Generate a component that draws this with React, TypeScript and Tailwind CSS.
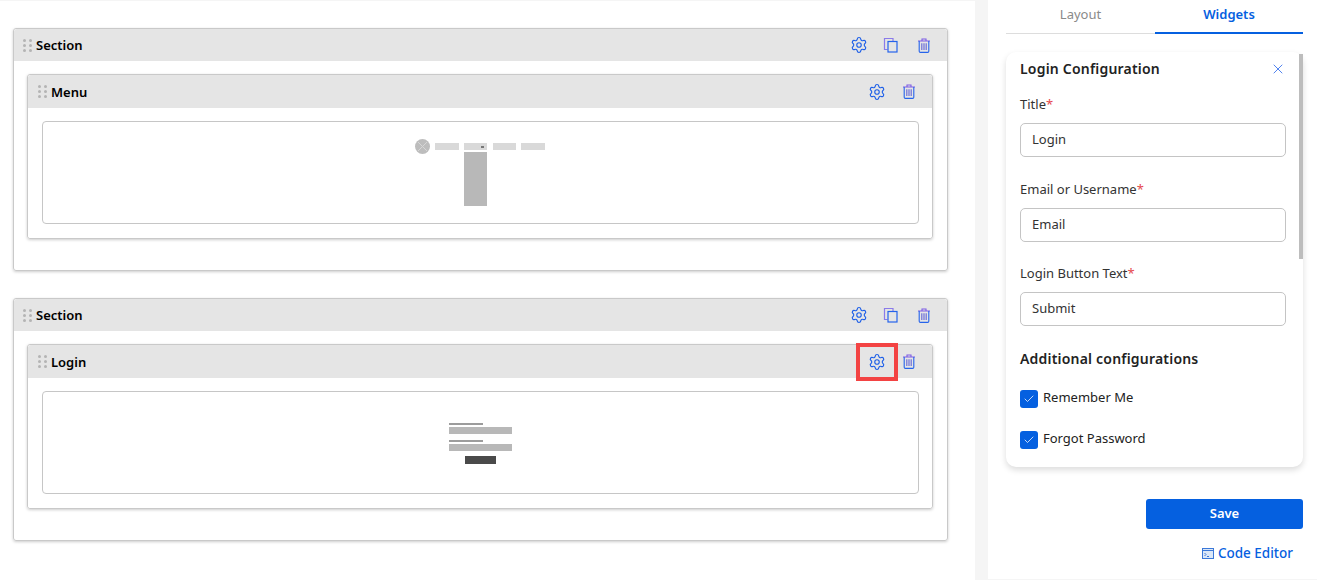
import { Check, Settings, X } from "lucide-react";

function CopyIcon() {
  return (
    <svg width="16" height="16" viewBox="0 0 16 16" fill="none" strokeWidth="1.2">
      <path d="M4.5 12.5H1.5V1.5H10V4" stroke="#8a7bea" />
      <rect x="5" y="4.5" width="9" height="10.5" stroke="#2563eb" />
    </svg>
  );
}

function BinIcon() {
  return (
    <svg width="14" height="15" viewBox="0 0 14 15" fill="none" strokeWidth="1.1">
      <path d="M1 3h12M5 3V1h4v2" stroke="#7c5ce6" />
      <path d="M2.2 3v10.2c0 .7.5 1.2 1.2 1.2h7.2c.7 0 1.2-.5 1.2-1.2V3" stroke="#2563eb" />
      <path d="M4.8 5.2v6.8M7 5.2v6.8M9.2 5.2v6.8" stroke="#6d6fd8" strokeWidth="1.2" />
    </svg>
  );
}

function Grip() {
  return (
    <div className="grid grid-cols-2 gap-x-[3px] gap-y-[2px]">
      {[0, 1, 2, 3, 4, 5].map((dot) => (
        <span key={dot} className="h-[3px] w-[3px] rounded-full bg-[#b4b4b4]" />
      ))}
    </div>
  );
}

function MenuPreview() {
  return (
    <div className="flex items-start gap-[5px] pt-[17px] pr-[2px]">
      <svg width="15" height="15" viewBox="0 0 15 15">
        <circle cx="7.5" cy="7.5" r="7.5" fill="#bdbdbd" />
        <path d="M3 3L12 12M12 3L3 12" stroke="#d6d6d6" strokeWidth="1" />
      </svg>
      <div className="mt-[4px] h-[7px] w-[24px] bg-[#d9d9d9]" />
      <div className="mt-[4px] flex w-[23px] flex-col gap-[2px]">
        <div className="flex h-[7px] items-center justify-end bg-[#d9d9d9] pr-[3px]">
          <span className="h-[2px] w-[3px] bg-[#777777]" />
        </div>
        <div className="h-[54px] bg-[#b8b8b8]" />
      </div>
      <div className="mt-[4px] ml-[1px] h-[7px] w-[23px] bg-[#d9d9d9]" />
      <div className="mt-[4px] h-[7px] w-[24px] bg-[#d9d9d9]" />
    </div>
  );
}

function LoginPreview() {
  return (
    <div className="flex w-[63px] flex-col pt-[31px]">
      <div className="h-[2px] w-[34px] bg-[#9c9c9c]" />
      <div className="mt-[2px] h-[7px] bg-[#b8b8b8]" />
      <div className="mt-[6px] h-[2px] w-[34px] bg-[#9c9c9c]" />
      <div className="mt-[2px] h-[7px] bg-[#b8b8b8]" />
      <div className="mt-[5px] h-[8px] w-[31px] self-center bg-[#4a4a4a]" />
    </div>
  );
}

function Widget({ title, preview, marked }: { title: string; preview: React.ReactNode; marked?: boolean }) {
  return (
    <div className="mt-[13px] mr-[14px] ml-[13px] rounded-[3px] border border-[#c9c9c9] shadow-[0_1px_3px_rgba(0,0,0,0.2)]">
      <div className="flex h-[33px] items-center rounded-t-[3px] bg-[#e5e5e5] pl-[10px]">
        <Grip />
        <span className="ml-[4px] pt-[2px] text-[13px] font-semibold text-black">{title}</span>
        <div className="ml-auto flex items-center pr-[16px]">
          <div className="relative mr-[16px] h-[18px]">
            <Settings className="h-[18px] w-[18px] text-[#1d5fe8]" strokeWidth={1.5} />
            {marked && (
              <div className="absolute -top-[10px] -left-[12px] h-[38px] w-[42px] border-4 border-[#f34343]" />
            )}
          </div>
          <BinIcon />
        </div>
      </div>
      <div className="rounded-b-[3px] bg-white pt-[13px] pr-[13px] pb-[14px] pl-[14px]">
        <div className="flex h-[103px] justify-center rounded-[4px] border border-[#c6c6c6]">{preview}</div>
      </div>
    </div>
  );
}

function Section({ title, preview, marked }: { title: string; preview: React.ReactNode; marked?: boolean }) {
  return (
    <div className="ml-[13px] h-[243px] w-[935px] rounded-[3px] border border-[#c9c9c9] shadow-[0_1px_3px_rgba(0,0,0,0.2)]">
      <div className="flex h-[32px] items-center rounded-t-[3px] bg-[#e5e5e5] pl-[9px]">
        <Grip />
        <span className="ml-[4px] pt-[2px] text-[13px] font-semibold text-black">Section</span>
        <div className="ml-auto flex items-center pr-[16px]">
          <Settings className="h-[18px] w-[18px] text-[#1d5fe8]" strokeWidth={1.5} />
          <span className="ml-[15px]">
            <CopyIcon />
          </span>
          <span className="ml-[18px]">
            <BinIcon />
          </span>
        </div>
      </div>
      <Widget title={title} preview={preview} marked={marked} />
    </div>
  );
}

function Field({ label, value }: { label: string; value: string }) {
  return (
    <div>
      <label className="block text-[13px] leading-[18px] text-[#333333]">
        {label}
        <span className="text-[#e5484d]">*</span>
      </label>
      <div className="mt-[10px] flex h-[34px] items-center rounded-[5px] border border-[#c4c4c4] px-[11px] text-[13px] text-[#333333]">
        {value}
      </div>
    </div>
  );
}

function CheckRow({ label }: { label: string }) {
  return (
    <div className="flex items-start gap-[5px]">
      <span className="mt-[1px] flex h-[18px] w-[18px] items-center justify-center rounded-[3px] bg-[#0560e0]">
        <Check className="h-[12px] w-[12px] text-white" strokeWidth={1.5} />
      </span>
      <span className="text-[13px] leading-[16px] text-[#222222]">{label}</span>
    </div>
  );
}

export default function App() {
  return (
    <div className="flex h-[580px] w-[1317px] overflow-hidden bg-[#f5f5f5] font-['Noto_Sans','Open_Sans',sans-serif]">
      <main className="mt-[1px] h-[579px] w-[975px] bg-white pt-[27px]">
        <Section title="Menu" preview={<MenuPreview />} />
        <div className="h-[27px]" />
        <Section title="Login" preview={<LoginPreview />} marked />
      </main>

      <aside className="ml-[13px] flex h-[579px] w-[329px] flex-col bg-white pr-[14px] pl-[18px]">
        <div className="flex h-[34px] border-b border-[#dddddd] text-[13px]">
          <div className="flex w-[149px] justify-center pt-[5px] text-[#8a8a8a]">Layout</div>
          <div className="-mb-px flex flex-1 justify-center border-b-[2px] border-[#0560e0] pt-[5px] font-semibold text-[#0560e0]">
            Widgets
          </div>
        </div>

        <div className="relative mt-[18px] h-[415px] rounded-[10px] bg-white pt-[7px] pr-[17px] pl-[14px] shadow-[0_3px_6px_rgba(0,0,0,0.14)]">
          <div className="absolute top-[2px] right-0 h-[205px] w-[4px] bg-[#bdbdbd]" />
          <div className="flex items-center justify-between">
            <h2 className="text-[14px] leading-[20px] font-semibold tracking-[0.2px] text-[#222222]">
              Login Configuration
            </h2>
            <X className="h-[16px] w-[16px] text-[#2563eb]" strokeWidth={1.2} />
          </div>
          <div className="mt-[16px] flex flex-col">
            <Field label="Title" value="Login" />
            <div className="h-[23px]" />
            <Field label="Email or Username" value="Email" />
            <div className="h-[22px]" />
            <Field label="Login Button Text" value="Submit" />
          </div>
          <h3 className="mt-[23px] text-[14px] leading-[20px] font-semibold tracking-[0.2px] text-[#222222]">
            Additional configurations
          </h3>
          <div className="mt-[20px] flex flex-col gap-[22px]">
            <CheckRow label="Remember Me" />
            <CheckRow label="Forgot Password" />
          </div>
        </div>

        <div className="mt-[32px] flex justify-end">
          <button className="h-[30px] w-[157px] rounded-[3px] bg-[#0560e0] text-[13px] font-semibold text-white">
            Save
          </button>
        </div>
        <div className="mt-[14px] flex items-center justify-end gap-[4px] pr-[10px] text-[13.5px] font-medium text-[#0560e0]">
          <svg width="12" height="11" viewBox="0 0 12 11" fill="none" stroke="#3b78d8" strokeWidth="1">
            <rect x="0.5" y="0.5" width="11" height="10" fill="#dbe7f8" />
            <path d="M0.5 2.5H11.5M2.5 5L4 6.5L2.5 8M5 8.5H7" />
          </svg>
          Code Editor
        </div>
      </aside>
    </div>
  );
}
